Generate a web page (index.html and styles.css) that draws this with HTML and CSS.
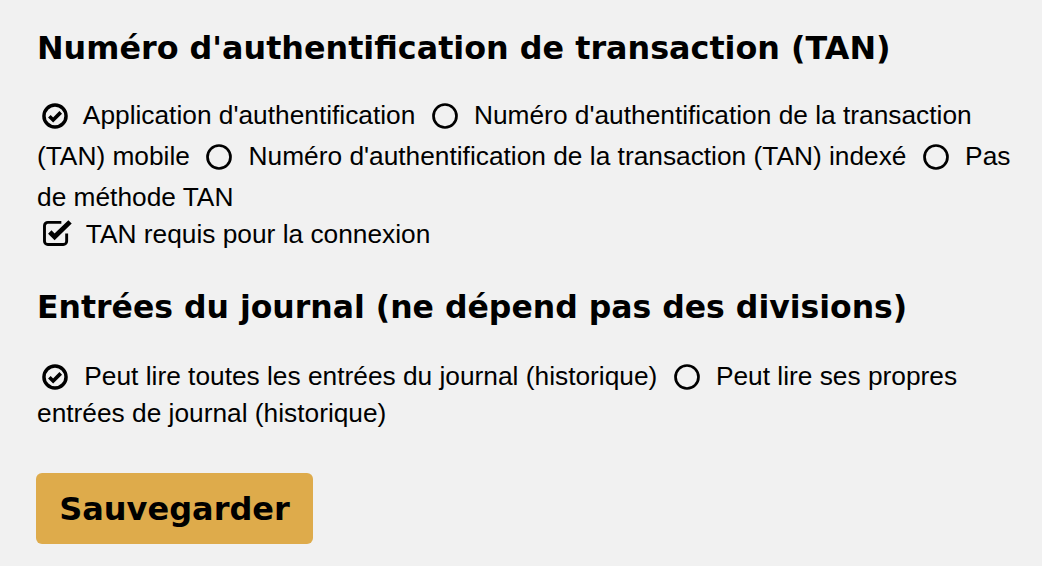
FILE: index.html
```html
<!DOCTYPE html>
<html lang="fr">
<head>
<meta charset="utf-8">
<title>TAN</title>
<link rel="stylesheet" href="styles.css">
</head>
<body>
<main class="page">
  <h2 class="title">Numéro d'authentification de transaction (TAN)</h2>
  <p class="choices choices-tan">
    <label class="opt"><svg class="ico ico-first" viewBox="0 0 24 24"><circle cx="12" cy="12" r="10.2" fill="none" stroke="#000" stroke-width="3.2"/><path d="M6.8 12.2l3.5 3.5L17.3 8.7" fill="none" stroke="#000" stroke-width="3.4"/></svg> Application d'authentification</label>
    <label class="opt"><svg class="ico" viewBox="0 0 24 24"><circle cx="12" cy="12" r="10.6" fill="none" stroke="#000" stroke-width="2.5"/></svg> Numéro d'authentification de la transaction (TAN) mobile</label>
    <label class="opt"><svg class="ico" viewBox="0 0 24 24"><circle cx="12" cy="12" r="10.6" fill="none" stroke="#000" stroke-width="2.5"/></svg> Numéro d'authentification de la transaction (TAN) indexé</label>
    <label class="opt"><svg class="ico" viewBox="0 0 24 24"><circle cx="12" cy="12" r="10.6" fill="none" stroke="#000" stroke-width="2.5"/></svg> Pas de méthode TAN</label>
  </p>
  <p class="choices choices-check">
    <label class="opt"><svg class="ico ico-first ico-sq" viewBox="0 0 32 28"><path d="M20 3.5H6A3.5 3.5 0 0 0 2.5 7v16A3.5 3.5 0 0 0 6 26.5h16a3.5 3.5 0 0 0 3.5-3.5v-8" fill="none" stroke="#000" stroke-width="3"/><path d="M8 13.5l5 5L29 3" fill="none" stroke="#000" stroke-width="5"/></svg> TAN requis pour la connexion</label>
  </p>
  <h2 class="title title-journal">Entrées du journal (ne dépend pas des divisions)</h2>
  <p class="choices choices-journal">
    <label class="opt"><svg class="ico ico-first" viewBox="0 0 24 24"><circle cx="12" cy="12" r="10.2" fill="none" stroke="#000" stroke-width="3.2"/><path d="M6.8 12.2l3.5 3.5L17.3 8.7" fill="none" stroke="#000" stroke-width="3.4"/></svg> Peut lire toutes les entrées du journal (historique)</label>
    <label class="opt"><svg class="ico" viewBox="0 0 24 24"><circle cx="12" cy="12" r="10.6" fill="none" stroke="#000" stroke-width="2.5"/></svg> Peut lire ses propres entrées de journal (historique)</label>
  </p>
  <div class="actions">
    <button class="btn" type="button">Sauvegarder</button>
  </div>
</main>
</body>
</html>
```
FILE: styles.css
```css
html, body {
  margin: 0;
  padding: 0;
  background: #f1f1f1;
}
body {
  font-family: "Liberation Sans", Arial, sans-serif;
  font-size: 26.3px;
  color: #000;
}
.page {
  padding: 28px 20px 0 37px;
}
.title {
  font-family: "DejaVu Sans", sans-serif;
  font-weight: bold;
  font-size: 31.8px;
  line-height: 40px;
  margin: 0;
}
.title-journal {
  margin-top: 36px;
  font-size: 31.5px;
}
.choices {
  margin: 0;
  line-height: 37px;
}
.choices-tan {
  margin-top: 27px;
  line-height: 41px;
}
.choices-check {
  line-height: 33px;
}
.choices-journal {
  margin-top: 31px;
}
.ico {
  width: 26px;
  height: 26px;
  vertical-align: -5px;
  margin-left: 9px;
  margin-right: 9px;
}
.ico-first {
  margin-left: 5px;
}
.ico-sq {
  width: 31px;
  height: 27px;
  margin-right: 6px;
  vertical-align: -3px;
}
.actions {
  margin-top: 41px;
}
.btn {
  font-family: "DejaVu Sans", sans-serif;
  font-weight: bold;
  font-size: 32px;
  background: #deab4b;
  color: #000;
  border: 0;
  border-radius: 6px;
  width: 277px;
  height: 71px;
  padding: 0;
  margin-left: -1px;
}
```
